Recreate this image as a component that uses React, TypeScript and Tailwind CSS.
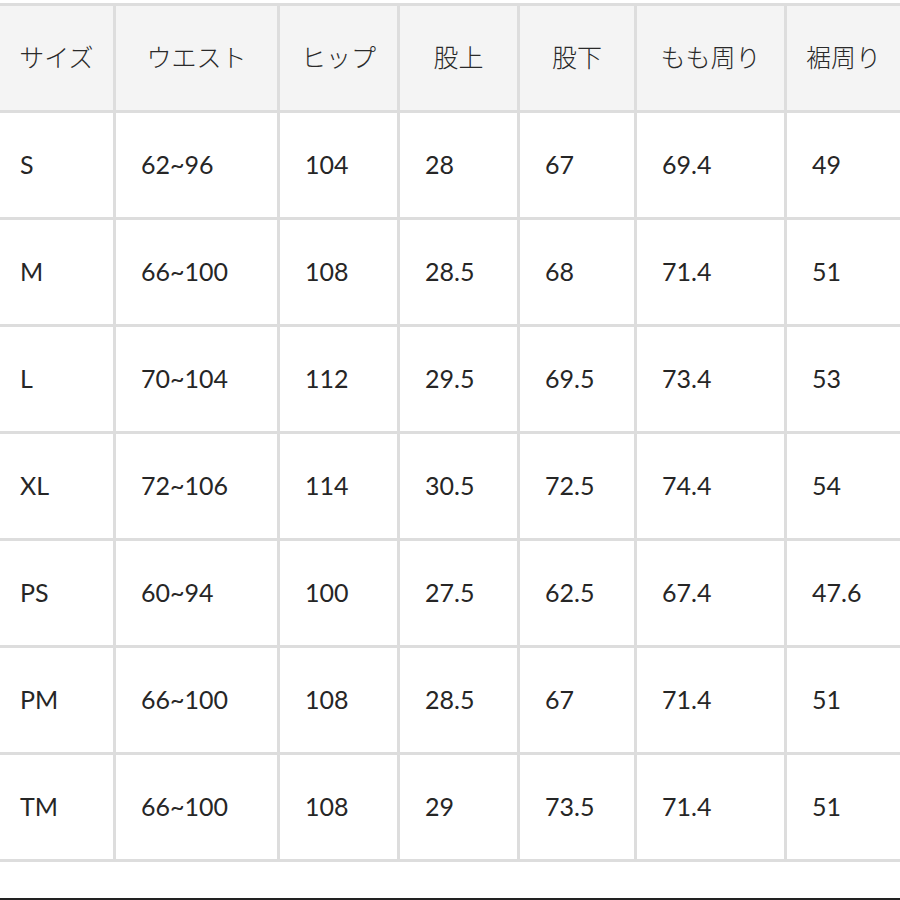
import React from "react";

const headers = ["サイズ", "ウエスト", "ヒップ", "股上", "股下", "もも周り", "裾周り"];
const rows = [
  ["S", "62~96", "104", "28", "67", "69.4", "49"],
  ["M", "66~100", "108", "28.5", "68", "71.4", "51"],
  ["L", "70~104", "112", "29.5", "69.5", "73.4", "53"],
  ["XL", "72~106", "114", "30.5", "72.5", "74.4", "54"],
  ["PS", "60~94", "100", "27.5", "62.5", "67.4", "47.6"],
  ["PM", "66~100", "108", "28.5", "67", "71.4", "51"],
  ["TM", "66~100", "108", "29", "73.5", "71.4", "51"],
];

export default function App() {
  return (
    <div
      className="w-[900px] h-[900px] bg-white overflow-hidden text-[#262626]"
      style={{ fontFamily: "Lato, 'Noto Sans CJK JP', sans-serif" }}
    >
      <div className="mt-[3px] pt-[3px] pb-[3px] bg-[#dddddd] grid grid-cols-[113px_161px_117px_117px_114px_147px_113px] gap-[3px]">
        {headers.map((h, i) => (
          <div
            key={"h" + i}
            className="h-[104px] pb-[2px] bg-[#f4f4f4] flex items-center justify-center text-[25px] font-light whitespace-nowrap text-[#2a2a2a]"
            style={{ fontFamily: "'Noto Sans CJK JP', sans-serif" }}
          >
            {h}
          </div>
        ))}
        {rows.map((r, ri) =>
          r.map((c, ci) => (
            <div
              key={ri + "-" + ci}
              className={
                "h-[104px] bg-white flex items-center text-[25px] " +
                (ci === 0 ? "pl-[20px]" : "pl-[25px]")
              }
            >
              {c}
            </div>
          ))
        )}
      </div>
      <div className="mt-[36px] h-[2px] bg-[#222222]" />
    </div>
  );
}
